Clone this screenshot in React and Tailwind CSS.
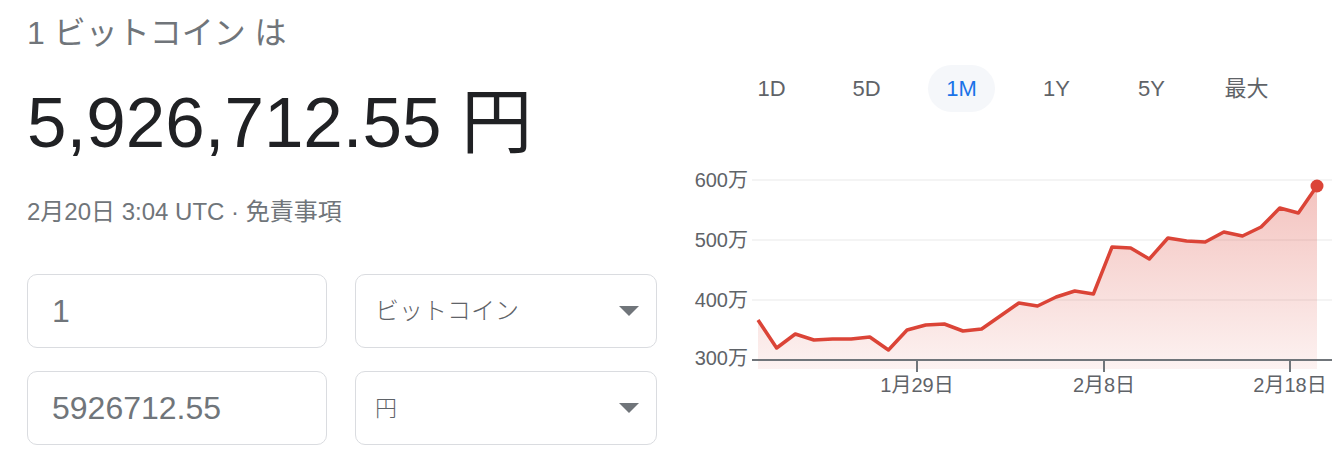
import React from 'react'

const FONT = { fontFamily: '"Liberation Sans", Arial, "Noto Sans CJK JP", sans-serif' }

// price per day, 1月19日 .. 2月20日 (screen y in px, chart local)
const POINTS = [320, 348, 334, 340, 339, 339, 337, 350, 330, 325, 324, 331, 329, 316, 303, 306, 297, 291, 294, 247, 248, 259, 238, 241, 242, 232, 236, 227, 208, 213, 186]

const RANGES = ['1D', '5D', '1M', '1Y', '5Y', '最大']

function Caret() {
  return (
    <svg width="20" height="10" viewBox="0 0 20 10">
      <polygon points="0,0 20,0 10,10" fill="#70757a" />
    </svg>
  )
}

function Chart() {
  const step = (637 - 78) / (POINTS.length - 1)
  const pts = POINTS.map((y, i) => [78 + i * step, y - 160])
  const line = pts.map(p => p.join(',')).join(' ')
  const last = pts[pts.length - 1]
  const area = `${line} ${last[0]},209 78,209`
  const grid = [
    { y: 20, label: '600万' },
    { y: 80, label: '500万' },
    { y: 140, label: '400万' },
  ]
  const ticks = [
    { x: 237, label: '1月29日' },
    { x: 424, label: '2月8日' },
    { x: 610, label: '2月18日' },
  ]
  return (
    <svg width="652" height="240" viewBox="0 0 652 240" style={FONT}>
      <defs>
        <linearGradient id="fillg" x1="0" y1="26" x2="0" y2="209" gradientUnits="userSpaceOnUse">
          <stop offset="0" stopColor="#db4437" stopOpacity="0.32" />
          <stop offset="1" stopColor="#db4437" stopOpacity="0.07" />
        </linearGradient>
      </defs>
      {grid.map(g => (
        <g key={g.label}>
          <line x1="72" x2="652" y1={g.y} y2={g.y} stroke="#f1f1f1" strokeWidth="1.5" />
          <text x="68" y={g.y} textAnchor="end" dominantBaseline="central" fontSize="20" fill="#5f6368">{g.label}</text>
        </g>
      ))}
      <polygon points={area} fill="url(#fillg)" />
      <line x1="72" x2="652" y1="200" y2="200" stroke="#70757a" strokeWidth="2" />
      <text x="68" y="198" textAnchor="end" dominantBaseline="central" fontSize="20" fill="#5f6368">300万</text>
      {ticks.map(t => (
        <g key={t.label}>
          <line x1={t.x} x2={t.x} y1="200" y2="212" stroke="#70757a" strokeWidth="2" />
          <text x={t.x} y="225" textAnchor="middle" dominantBaseline="central" fontSize="20" fill="#5f6368">{t.label}</text>
        </g>
      ))}
      <polyline points={line} fill="none" stroke="#db4437" strokeWidth="3.5" strokeLinejoin="round" />
      <circle cx={last[0]} cy={last[1]} r="6.5" fill="#db4437" />
    </svg>
  )
}

export default function App() {
  return (
    <div className="flex w-[1332px] h-[458px] bg-white overflow-hidden" style={FONT}>
      {/* Left: rate + converter */}
      <div className="w-[680px] shrink-0 pl-[27px]">
        <div className="h-[66px] flex items-center text-[32px] text-[#70757a]">1 ビットコイン は</div>
        <div className="mt-[21px] text-[71px] leading-none text-[#202124]">5,926,712.55 円</div>
        <div className="mt-[42px] text-[24px] leading-none text-[#70757a]">2月20日 3:04 UTC · 免責事項</div>

        <div className="mt-[50px] flex flex-col gap-[23px]">
          <div className="flex gap-[28px]">
            <div className="w-[300px] h-[74px] rounded-[10px] border border-[#dadce0] flex items-center pl-[24px] text-[32px] text-[#70757a]">1</div>
            <div className="w-[302px] h-[74px] rounded-[10px] border border-[#dadce0] flex items-center justify-between pl-[19px] pr-[17px]">
              <span className="text-[24px] font-light text-[#5f6368]">ビットコイン</span>
              <Caret />
            </div>
          </div>
          <div className="flex gap-[28px]">
            <div className="w-[300px] h-[74px] rounded-[10px] border border-[#dadce0] flex items-center pl-[24px] text-[32px] text-[#70757a]">5926712.55</div>
            <div className="w-[302px] h-[74px] rounded-[10px] border border-[#dadce0] flex items-center justify-between pl-[19px] pr-[17px]">
              <span className="text-[22px] font-light text-[#5f6368]">円</span>
              <Caret />
            </div>
          </div>
        </div>
      </div>

      {/* Right: range tabs + chart */}
      <div className="flex-1">
        <div className="mt-[65px] flex pl-[44px]">
          {RANGES.map(r => (
            <div key={r} className="w-[95px] flex justify-center">
              <span
                className={
                  r === '1M'
                    ? 'h-[47px] w-[67px] rounded-full bg-[#f5f7fa] flex items-center justify-center text-[22px] text-[#1a73e8]'
                    : 'h-[47px] w-[67px] flex items-center justify-center text-[22px] text-[#5f6368]'
                }
              >
                {r}
              </span>
            </div>
          ))}
        </div>
        <div className="mt-[48px]">
          <Chart />
        </div>
      </div>
    </div>
  )
}
